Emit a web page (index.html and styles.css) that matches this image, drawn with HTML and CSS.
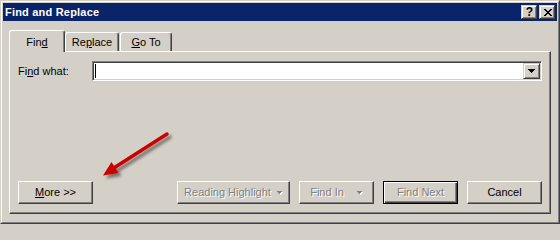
FILE: index.html
```html
<!DOCTYPE html>
<html>
<head>
<meta charset="utf-8">
<link rel="stylesheet" href="styles.css">
</head>
<body>
<div class="window">
  <div class="frame">
    <div class="titlebar">
      <span class="title">Find and Replace</span>
      <div class="caption-btns">
        <span class="cbtn help">?</span>
        <span class="cbtn close">
          <svg width="8" height="7" viewBox="0 0 8 7" shape-rendering="crispEdges">
            <path d="M0 0h2v1h-2zM6 0h2v1h-2zM1 1h2v1h-2zM5 1h2v1h-2zM2 2h4v1h-4zM3 3h2v1h-2zM2 4h4v1h-4zM1 5h2v1h-2zM5 5h2v1h-2zM0 6h2v1h-2zM6 6h2v1h-2z" fill="#000"/>
          </svg>
        </span>
      </div>
    </div>
    <div class="body">
      <div class="tabs">
        <div class="tab active">Fin<u>d</u></div>
        <div class="tab replace">Re<u>p</u>lace</div>
        <div class="tab goto"><u>G</u>o To</div>
      </div>
      <div class="panel">
        <div class="find-row">
          <span class="label">Fi<u>n</u>d what:</span>
          <div class="combo">
            <span class="caret"></span>
            <span class="combo-btn">
              <svg width="7" height="4" viewBox="0 0 7 4" shape-rendering="crispEdges">
                <path d="M0 0h7v1h-7zM1 1h5v1h-5zM2 2h3v1h-3zM3 3h1v1h-1z" fill="#000"/>
              </svg>
            </span>
          </div>
        </div>
        <div class="buttons">
          <button class="btn more"><u>M</u>ore &gt;&gt;</button>
          <div class="right-btns">
            <button class="btn disabled reading">Reading Highlight
              <svg class="dd dd-reading" width="6" height="4" viewBox="0 0 6 4" shape-rendering="crispEdges">
                <path d="M1 1h5v1h-5zM2 2h3v1h-3zM3 3h1v1h-1z" fill="#fff"/>
                <path d="M0 0h5v1h-5zM1 1h3v1h-3zM2 2h1v1h-1z" fill="#808080"/>
              </svg>
            </button>
            <button class="btn disabled findin">Find In
              <svg class="dd dd-findin" width="6" height="4" viewBox="0 0 6 4" shape-rendering="crispEdges">
                <path d="M1 1h5v1h-5zM2 2h3v1h-3zM3 3h1v1h-1z" fill="#fff"/>
                <path d="M0 0h5v1h-5zM1 1h3v1h-3zM2 2h1v1h-1z" fill="#808080"/>
              </svg>
            </button>
            <button class="btn disabled default">Find Next</button>
            <button class="btn cancel">Cancel</button>
          </div>
        </div>
      </div>
    </div>
  </div>
  <svg class="arrow" width="560" height="224" viewBox="0 0 560 224">
    <defs>
      <filter id="shadow" x="-20%" y="-20%" width="150%" height="150%">
        <feDropShadow dx="3" dy="3" stdDeviation="1.6" flood-color="#000" flood-opacity="0.45"/>
      </filter>
    </defs>
    <g filter="url(#shadow)">
      <line x1="167" y1="134" x2="113" y2="168.5" stroke="#cc0000" stroke-width="3.5" stroke-linecap="round"/>
      <polygon points="103,175.5 118.5,173 111.5,162" fill="#cc0000"/>
    </g>
  </svg>
</div>
</body>
</html>
```

FILE: styles.css
```css
html, body {
  margin: 0;
  padding: 0;
  background: #d4d0c8;
}

body {
  font-family: "Liberation Sans", Arial, sans-serif;
  font-size: 11px;
  color: #000;
}

.window {
  position: relative;
  width: 560px;
  height: 224px;
  box-sizing: border-box;
  border: 1px solid;
  border-color: #d4d0c8 #404040 #404040 #d4d0c8;
  background: #d4d0c8;
}

.frame {
  height: 100%;
  box-sizing: border-box;
  border: 1px solid;
  border-color: #fff #808080 #808080 #fff;
  padding: 1px;
  display: flex;
  flex-direction: column;
}

.titlebar {
  height: 18px;
  flex: none;
  background: #0a246a;
  display: flex;
  align-items: center;
  justify-content: space-between;
  padding: 0 2px;
}

.title {
  color: #fff;
  font-weight: bold;
  font-size: 11px;
  letter-spacing: 0.2px;
  line-height: 18px;
}

.caption-btns {
  display: flex;
  gap: 2px;
}

.cbtn {
  width: 16px;
  height: 14px;
  box-sizing: border-box;
  border: 1px solid;
  border-color: #d4d0c8 #404040 #404040 #d4d0c8;
  box-shadow: inset 1px 1px #fff, inset -1px -1px #808080;
  background: #d4d0c8;
  display: flex;
  align-items: center;
  justify-content: center;
}

.cbtn.help {
  font-weight: bold;
  font-size: 12px;
  line-height: 12px;
  padding-left: 1px;
}

.cbtn.close svg {
  display: block;
  margin-left: 1px;
}

.body {
  flex: 1;
  display: flex;
  flex-direction: column;
  padding: 9px 6px 7px 6px;
}

.tabs {
  height: 21px;
  display: flex;
  align-items: flex-end;
}

.tab {
  box-sizing: border-box;
  height: 19px;
  border: 1px solid;
  border-bottom: none;
  border-color: #fff #404040 transparent #fff;
  border-radius: 3px 3px 0 0;
  box-shadow: inset -1px 0 #808080;
  background: #d4d0c8;
  text-align: center;
  padding-top: 3px;
  line-height: 13px;
}

.tab.active {
  width: 56px;
  height: 22px;
  margin-bottom: -1px;
  padding-top: 5px;
  position: relative;
  z-index: 1;
}

.tab.replace {
  width: 54px;
}

.tab.goto {
  width: 52px;
  margin-left: 1px;
}

.panel {
  box-sizing: border-box;
  height: 163px;
  border: 1px solid;
  border-color: #fff #404040 #404040 #fff;
  box-shadow: inset -1px -1px #808080;
  padding: 9px 8px;
  display: flex;
  flex-direction: column;
  justify-content: space-between;
}

.find-row {
  display: flex;
  align-items: center;
  height: 20px;
}

.label {
  width: 74px;
  line-height: 13px;
}

.combo {
  width: 450px;
  height: 20px;
  box-sizing: border-box;
  background: #fff;
  border: 1px solid;
  border-color: #808080 #fff #fff #808080;
  box-shadow: inset 1px 1px #404040, inset -1px -1px #d4d0c8;
  padding: 1px;
  display: flex;
  justify-content: space-between;
  align-items: stretch;
}

.caret {
  width: 1px;
  background: #000;
  margin: 1px 0 1px 1px;
}

.combo-btn {
  width: 17px;
  box-sizing: border-box;
  border: 1px solid;
  border-color: #d4d0c8 #404040 #404040 #d4d0c8;
  box-shadow: inset 1px 1px #fff, inset -1px -1px #808080;
  background: #d4d0c8;
  display: flex;
  align-items: center;
  justify-content: center;
}

.combo-btn svg {
  display: block;
}

.buttons {
  display: flex;
  height: 23px;
}

.right-btns {
  margin-left: auto;
  display: flex;
  gap: 9px;
}

.btn {
  box-sizing: border-box;
  width: 75px;
  height: 23px;
  margin: 0;
  padding: 0;
  font-family: "Liberation Sans", Arial, sans-serif;
  font-size: 11px;
  color: #000;
  background: #d4d0c8;
  border: 1px solid;
  border-color: #fff #404040 #404040 #fff;
  box-shadow: inset -1px -1px #808080;
  display: flex;
  align-items: center;
  justify-content: center;
  line-height: 13px;
}

.btn.reading {
  width: 113px;
}

.btn.disabled {
  color: #808080;
  text-shadow: 1px 1px 0 #fff;
}

.btn.default {
  border-color: #000;
  box-shadow: inset 1px 1px #fff, inset -1px -1px #404040, inset -2px -2px #808080;
}

.dd {
  display: block;
}

.dd-reading {
  margin-left: 6px;
}

.dd-findin {
  margin-left: 13px;
}

.arrow {
  position: absolute;
  left: -1px;
  top: -1px;
  pointer-events: none;
}
```
